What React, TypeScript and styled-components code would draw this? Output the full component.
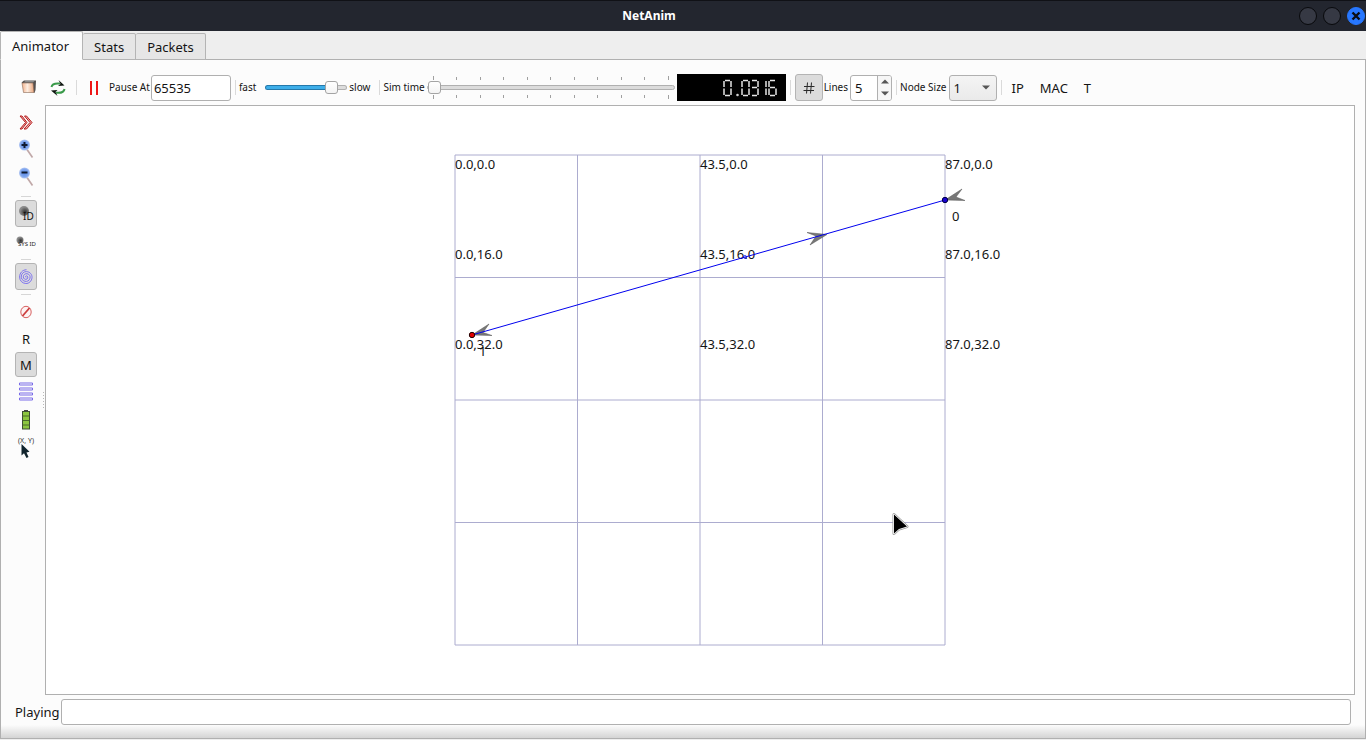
import React, { useState } from "react";
import styled, { createGlobalStyle, css } from "styled-components";

const GlobalStyle = createGlobalStyle`
  *, *::before, *::after { box-sizing: border-box; }
  html, body { margin: 0; padding: 0; }
  body, button, input, select { font-family: "Noto Sans", sans-serif; font-size: 13px; color: #141414; }
`;

const Window = styled.div`
  display: flex;
  flex-direction: column;
  min-height: 100vh;
  background: #eeeeee;
`;

const TitleBar = styled.header`
  display: flex;
  align-items: center;
  height: 31px;
  background: #23262f;
  border-top: 1px solid #101116;
`;

const Title = styled.h1`
  flex: 1;
  margin: 0;
  text-align: center;
  font-size: 12px;
  font-weight: 700;
  line-height: 18px;
  color: #ffffff;
`;

const WindowControls = styled.div`
  display: flex;
  gap: 6px;
  padding: 0 1px;
`;

const WindowButton = styled.button<{ $close?: boolean }>`
  display: flex;
  align-items: center;
  justify-content: center;
  width: 18px;
  height: 18px;
  padding: 0;
  border-radius: 50%;
  border: 1px solid ${(p) => (p.$close ? "#2777ff" : "#08090c")};
  background: ${(p) => (p.$close ? "#2777ff" : "#363944")};
`;

const TabBar = styled.nav`
  display: flex;
  align-items: flex-end;
  height: 29px;
  border-bottom: 1px solid #b0b0b0;
`;

const Tab = styled.button<{ $active?: boolean }>`
  height: 27px;
  margin: 0 0 -1px;
  padding: 0 11px;
  line-height: 18px;
  border: 1px solid #b4b4b4;
  border-left-width: 0;
  border-radius: 2px 2px 0 0;
  background: #e6e6e6;
  ${(p) =>
    p.$active &&
    css`
      height: 29px;
      padding: 0 13px 0 11px;
      border-left-width: 1px;
      border-bottom-color: #fcfcfc;
      background: #fcfcfc;
    `}
`;

const Panel = styled.main`
  flex: 1;
  display: flex;
  flex-direction: column;
  margin-bottom: 1px;
  border: 1px solid #b0b0b0;
  border-top: 0;
  background: linear-gradient(to top, #d4d4d4 0, #fcfcfc 13px);
`;

const Toolbar = styled.div`
  display: flex;
  align-items: center;
  height: 45px;
  padding: 13px 0 3px 19px;
  white-space: nowrap;
`;

const IconButton = styled.button`
  display: flex;
  align-items: center;
  justify-content: center;
  width: 18px;
  height: 27px;
  padding: 0;
  border: 0;
  background: none;
  & + & { margin-left: 11px; }
`;

const Divider = styled.span<{ $before?: number; $after?: number }>`
  flex: none;
  width: 1px;
  height: 15px;
  margin: 0 ${(p) => p.$after ?? 3}px 0 ${(p) => p.$before ?? 4}px;
  background: #dadada;
`;

const SmallLabel = styled.label`
  flex: none;
  font-size: 10px;
  line-height: 15px;
`;

const PauseLabel = styled(SmallLabel)`
  margin-left: 6px;
`;

const TextInput = styled.input`
  height: 26px;
  padding: 0 2px;
  border: 1px solid #b0b0b0;
  border-radius: 3px;
  background: #ffffff;
  outline: none;
`;

const PauseInput = styled(TextInput)`
  width: 80px;
  margin-left: 1px;
`;

const Range = styled.input`
  appearance: none;
  display: block;
  width: 100%;
  height: 13px;
  margin: 0;
  background: none;
  &::-webkit-slider-runnable-track {
    height: 5px;
    border: 1px solid #b0b0b0;
    border-radius: 3px;
    background: #dcdcdc;
  }
  &::-webkit-slider-thumb {
    appearance: none;
    width: 13px;
    height: 13px;
    margin-top: -5px;
    border: 1px solid #a4a4a4;
    border-radius: 3px;
    background: linear-gradient(#ffffff, #f4f4f4);
  }
`;

const SpeedRange = styled(Range)<{ $fill: number }>`
  width: 82px;
  margin: 0 2px 0 9px;
  &::-webkit-slider-runnable-track {
    border-color: transparent;
    background:
      linear-gradient(to right, #3daee9 ${(p) => p.$fill}%, #dcdcdc ${(p) => p.$fill}%) padding-box,
      linear-gradient(to right, #2478aa ${(p) => p.$fill}%, #b0b0b0 ${(p) => p.$fill}%) border-box;
  }
`;

const TimeSlider = styled.div`
  width: 248px;
  margin-left: 2px;
`;

const TickRow = styled.div<{ $below?: boolean }>`
  display: flex;
  justify-content: space-between;
  align-items: ${(p) => (p.$below ? "flex-start" : "flex-end")};
  height: 5px;
  margin: ${(p) => (p.$below ? "1px 6px 0" : "0 6px 1px")};
`;

const Tick = styled.i<{ $end?: boolean }>`
  width: 1px;
  height: ${(p) => (p.$end ? 4 : 3)}px;
  background: #a0a0a0;
`;

const LcdPanel = styled.output`
  display: flex;
  align-items: center;
  justify-content: flex-end;
  width: 109px;
  height: 27px;
  margin-left: 2px;
  padding-right: 9px;
  background: #000000;
`;

const pressed = css`
  border: 1px solid #b4b4b4;
  border-radius: 3px;
  background: #dcdcdc;
`;

const GridButton = styled.button`
  display: flex;
  align-items: center;
  justify-content: center;
  width: 28px;
  height: 27px;
  margin-right: 1px;
  padding: 0;
  ${pressed}
`;

const SpinBox = styled.div`
  display: flex;
  width: 42px;
  height: 26px;
  margin-left: 2px;
  border: 1px solid #b0b0b0;
  border-radius: 3px;
  background: #ffffff;
  overflow: hidden;
`;

const SpinInput = styled.input`
  flex: 1;
  min-width: 0;
  padding: 0 4px;
  border: 0;
  outline: none;
  background: none;
`;

const SpinButtons = styled.div`
  display: flex;
  flex-direction: column;
  width: 14px;
  border-left: 1px solid #b0b0b0;
  background: #f6f6f6;
`;

const SpinButton = styled.button`
  flex: 1;
  display: flex;
  align-items: center;
  justify-content: center;
  padding: 0;
  border: 0;
  background: none;
`;

const SelectWrap = styled.div`
  display: grid;
  align-items: center;
  margin-left: 2px;
  & > * { grid-area: 1 / 1; }
  & > svg { justify-self: end; margin-right: 7px; pointer-events: none; }
`;

const Select = styled.select`
  appearance: none;
  width: 48px;
  height: 26px;
  padding: 0 4px;
  border: 1px solid #b0b0b0;
  border-radius: 3px;
  background: linear-gradient(#f4f4f4, #eaeaea);
`;

const TextButton = styled.button`
  padding: 0;
  margin-left: 10px;
  border: 0;
  background: none;
  line-height: 18px;
  & + & { margin-left: 16px; }
`;

const Workspace = styled.div`
  flex: 1;
  display: flex;
  padding-right: 10px;
`;

const SideBar = styled.div`
  display: flex;
  flex-direction: column;
  align-items: center;
  gap: 1px;
  width: 36px;
  padding: 4px 0 0 14px;
`;

const SideButton = styled.button<{ $pressed?: boolean; $text?: boolean }>`
  display: flex;
  align-items: center;
  justify-content: center;
  width: 22px;
  height: ${(p) => (p.$text ? 25 : 27)}px;
  padding: 0;
  border: 1px solid transparent;
  background: none;
  line-height: 18px;
  ${(p) => p.$pressed && pressed}
`;

const SideDivider = styled.span`
  width: 10px;
  height: 1px;
  margin: 3px 0 2px;
  background: #d6d6d6;
`;

const Splitter = styled.div`
  display: flex;
  align-items: center;
  justify-content: center;
  width: 8px;
  &::before {
    content: "";
    width: 1px;
    height: 17px;
    margin-left: 4px;
    background: repeating-linear-gradient(#b8b8b8 0 1px, transparent 1px 3px);
  }
`;

const Canvas = styled.section`
  flex: 1;
  display: flex;
  align-items: center;
  justify-content: center;
  border: 1px solid #b0b0b0;
  background: #ffffff;
`;

const Scene = styled.svg`
  display: block;
  font-size: 13px;
  fill: #141414;
`;

const StatusBar = styled.footer`
  display: flex;
  align-items: center;
  gap: 1px;
  padding: 4px 14px 13px;
`;

const StatusLabel = styled.label`
  line-height: 18px;
`;

const StatusInput = styled(TextInput)`
  flex: 1;
`;

/* Seven-segment display: a top, b/c right, d bottom, e/f left, g middle. */
const SEGMENTS: Record<string, [number, number, number, number]> = {
  a: [1, 1, 6, 1],
  b: [7, 1.5, 7, 7.5],
  c: [7, 9, 7, 15.5],
  d: [1, 16, 6, 16],
  e: [0, 9, 0, 15.5],
  f: [0, 1.5, 0, 7.5],
  g: [1, 8, 6, 8],
};

const DIGITS: Record<string, string> = {
  "0": "abcdef", "1": "bc", "2": "abdeg", "3": "abcdg", "4": "bcfg",
  "5": "acdfg", "6": "acdefg", "7": "abc", "8": "abcdefg", "9": "abcdfg", ".": "",
};

function Lcd({ value }: { value: string }) {
  const pitch = 9;
  return (
    <LcdPanel aria-label={value}>
      <svg width={value.length * pitch} height="18" viewBox={`-1 -0.5 ${value.length * pitch} 18`} role="img" aria-label={value}>
        <g stroke="#e4e4e4" strokeWidth="1.5">
          {value.split("").map((ch, i) => (
            <g key={i} transform={`translate(${i * pitch} 0)`}>
              {ch === "." && <circle cx="4.5" cy="15.5" r="0.5" />}
              {DIGITS[ch].split("").map((s) => {
                const [x1, y1, x2, y2] = SEGMENTS[s];
                const dx = ch === "1" ? -1 : 0;
                return <line key={s} x1={x1 + dx} y1={y1} x2={x2 + dx} y2={y2} />;
              })}
            </g>
          ))}
        </g>
      </svg>
    </LcdPanel>
  );
}

const Arrow = ({ up }: { up?: boolean }) => (
  <svg width="8" height="5" viewBox="0 0 8 5">
    <path d={up ? "M0 4.5 4 0.5 8 4.5z" : "M0 0.5 4 4.5 8 0.5z"} fill="#555" />
  </svg>
);

const OpenIcon = () => (
  <svg width="16" height="16" viewBox="0 -0.5 16 16">
    <defs>
      <linearGradient id="openFace" x1="0" x2="1">
        <stop offset="0" stopColor="#f2b08a" />
        <stop offset="0.45" stopColor="#fdeee2" />
        <stop offset="1" stopColor="#e9a57c" />
      </linearGradient>
    </defs>
    <path d="M0.500 2 3 0h12l-0.500 9.500L13.500 12.500z" fill="#54504e" />
    <path d="M2.500 2 4.500 0.500h9L12 2z" fill="#8c8c8c" />
    <path d="M1 2.500h11l1 9.500H2.500z" fill="url(#openFace)" stroke="#8a6a58" strokeWidth="0.6" />
  </svg>
);

const ReloadIcon = () => (
  <svg width="16" height="16" viewBox="0 0 16 16">
    <g fill="none" stroke="#3a9a4a" strokeWidth="2">
      <path d="M1.500 7C2 4 5 3 10 3.500" />
      <path d="M14.500 9C14 12.500 11 13.200 6 12.700" />
    </g>
    <path d="M8.500 0 14.500 5.500 8 6 10.500 4z" fill="#0c140e" />
    <path d="M7.500 16 1 10.500 7.500 10 5.500 12z" fill="#0c140e" />
  </svg>
);

const PauseIcon = () => (
  <svg width="10" height="16" viewBox="0 0 10 16">
    <path d="M2 1v14M8 1v14" stroke="#ee0c0c" strokeWidth="1.900" />
  </svg>
);

const GridIcon = () => (
  <svg width="12" height="12" viewBox="0 0 12 12">
    <path d="M4.500 0.500 3.500 11.500M8.500 0.500 7.500 11.500M1 4.500h10.500M0.500 8.500H11" fill="none" stroke="#2a2a2a" />
  </svg>
);

const ForwardIcon = () => (
  <svg width="14" height="14" viewBox="0 0.5 14 14" overflow="visible">
    <g fill="#f0b4b4" stroke="#b51a1a" strokeWidth="1">
      <path d="M1 0.500 6.500 7 1 13.500 3 13.500 8 7 3 0.500z" />
      <path d="M5.500 0.500 11 7 5 13.500 7.500 13.500 13 7 7.500 0.500z" />
    </g>
  </svg>
);

const ZoomIcon = ({ plus }: { plus?: boolean }) => (
  <svg width="16" height="20" viewBox="0 2.5 16 20" overflow="visible">
    <defs>
      <radialGradient id="lens">
        <stop offset="0" stopColor="#5a8bea" />
        <stop offset="0.7" stopColor="#7fa5ee" />
        <stop offset="1" stopColor="#b4c8f2" />
      </radialGradient>
    </defs>
    <path d="M9 11 14.500 19" stroke="#c0a8a8" strokeWidth="1.600" />
    <circle cx="6.500" cy="6.500" r="5.500" fill="url(#lens)" />
    <path d={plus ? "M3.500 6.500h6M6.500 3.500v6" : "M3.500 6h6"} stroke="#101a30" strokeWidth="2" />
  </svg>
);

const IdIcon = () => (
  <svg width="16" height="18" viewBox="0 0 16 18">
    <defs>
      <radialGradient id="ball" cx="0.6" cy="0.6">
        <stop offset="0" stopColor="#2e2e2e" />
        <stop offset="1" stopColor="#8c8c8c" />
      </radialGradient>
    </defs>
    <circle cx="6" cy="6" r="5" fill="url(#ball)" />
    <text x="5" y="15" fontSize="10" fontFamily="Noto Sans, sans-serif" fill="#111">ID</text>
  </svg>
);

const SysIdIcon = () => (
  <svg width="20" height="14" viewBox="0 -1 20 14">
    <circle cx="4" cy="4" r="3.500" fill="url(#ball)" />
    <text x="2" y="10" fontSize="6" fontFamily="Noto Sans, sans-serif" fill="#222">SYS ID</text>
  </svg>
);

const SpiralIcon = () => (
  <svg width="14" height="16" viewBox="0 0 14 16">
    <path
      d="M7 8.500C6.200 8 6.500 6.800 7.500 6.800 9 6.900 9.300 9 8 10 6.300 11 4.300 9.800 4.300 7.800 4.400 5.500 6.300 4.500 8 4.700 10.500 5 11.500 7.200 11 9.200 10.300 11.800 8 12.800 6 12.300 3.300 11.600 2 9.500 2.300 7 2.700 4.200 5 2.500 7.500 2.600 11 2.800 13.200 5.500 13 8.500 12.800 12 10 14.700 6.800 14.500 3 14.300 0.700 11.500 0.600 8 0.600 4 3.500 0.800 7.500 0.700"
      fill="none" stroke="#7468f0" strokeWidth="0.900"
    />
  </svg>
);

const ForbidIcon = () => (
  <svg width="12" height="14" viewBox="0 0 12 14">
    <ellipse cx="6" cy="7" rx="5.200" ry="5.700" fill="#fdf3f3" stroke="#d25050" strokeWidth="0.900" />
    <path d="M2.500 11 9.500 3" stroke="#cc3c3c" strokeWidth="1.800" />
  </svg>
);

const LinesIcon = () => (
  <svg width="14" height="20" viewBox="0 0.5 14 20">
    <g fill="none" stroke="#7a6ce8" strokeWidth="1">
      {[1.5, 6.5, 11.5, 16.5].map((y) => (
        <path key={y} d={`M0.500 ${y}h13M0.500 ${y + 2}h13M0.500 ${y}v2M13.500 ${y}v2`} />
      ))}
    </g>
  </svg>
);

const BatteryIcon = () => (
  <svg width="10" height="20" viewBox="0 0.5 10 20">
    <path d="M3 0.500h4V2H3z" fill="#444" />
    <rect x="1.500" y="2" width="7" height="17.500" fill="#8cc63f" stroke="#3f4f35" />
    <path d="M1.500 6.500h7M1.500 11h7M1.500 15.500h7" stroke="#4b6b2c" />
  </svg>
);

const PositionIcon = () => (
  <svg width="18" height="24" viewBox="0 0 18 24">
    <text x="9" y="7" textAnchor="middle" fontSize="7" fontFamily="Noto Sans, sans-serif" fill="#333">(X, Y)</text>
    <path d="M4.500 8 4.500 19.500 7 17.200 9.500 22 11.500 21 9.500 16.500 12.500 15.800z" fill="#10242c" />
  </svg>
);

const GRID = [0, 122.5, 245, 367.5, 490];
const COLUMNS: [number, string][] = [[0, "0.0"], [245, "43.5"], [490, "87.0"]];
const ROWS: [number, string][] = [[14, "0.0"], [104, "16.0"], [194, "32.0"]];

function AnimationScene() {
  return (
    <Scene width="620" height="500" viewBox="-65 -5 620 500">
      <g stroke="#acaccf" strokeWidth="1">
        {GRID.map((v) => (
          <React.Fragment key={v}>
            <line x1={v} y1="0" x2={v} y2="490" />
            <line x1="0" y1={v} x2="490" y2={v} />
          </React.Fragment>
        ))}
      </g>
      {ROWS.map(([y, row]) =>
        COLUMNS.map(([x, col]) => (
          <text key={col + row} x={x} y={y}>{`${col},${row}`}</text>
        ))
      )}
      <text x="497" y="66">0</text>
      <text x="24" y="201">1</text>
      <g fill="#777777" stroke="#555555" strokeWidth="0.500">
        <path d="M17 180 34 169 28 177.500 37 180.500z" />
        <path d="M490 45 507 34 501 42 510 45.500z" />
        <path d="M372 79.500 352 77.500 361 81 355 90z" />
      </g>
      <g stroke="#0000ee" fill="none">
        <line x1="17" y1="180" x2="490" y2="45" />
        <circle cx="290" cy="102" r="1.500" strokeWidth="0.700" />
      </g>
      <circle cx="17" cy="180" r="2.700" fill="#e00000" stroke="#220000" />
      <circle cx="490" cy="45" r="2.700" fill="#1800d0" stroke="#000044" />
      <g transform="translate(0 1)" strokeLinejoin="round">
        <path d="M439 358.500v19l5-4.500 8-2.500z" stroke="#999" strokeWidth="3" />
        <path d="M439 358.500v19l5-4.500 8-2.500z" stroke="#fff" strokeWidth="1.500" />
        <path d="M439 358.500v19l5-4.500 8-2.500z" fill="#000" />
      </g>
    </Scene>
  );
}

export default function App() {
  const [speed, setSpeed] = useState(88);
  const [time, setTime] = useState(0);
  return (
    <>
      <GlobalStyle />
      <Window>
        <TitleBar>
          <Title>NetAnim</Title>
          <WindowControls>
            <WindowButton aria-label="Minimize" />
            <WindowButton aria-label="Maximize" />
            <WindowButton $close aria-label="Close">
              <svg width="10" height="10" viewBox="0 0 10 10">
                <path d="M1.500 1.500 8.500 8.500M8.500 1.500 1.500 8.500" stroke="#0b0d14" strokeWidth="2.400" />
              </svg>
            </WindowButton>
          </WindowControls>
        </TitleBar>
        <TabBar>
          <Tab $active>Animator</Tab>
          <Tab>Stats</Tab>
          <Tab>Packets</Tab>
        </TabBar>
        <Panel>
          <Toolbar>
            <IconButton aria-label="Open trace file"><OpenIcon /></IconButton>
            <IconButton aria-label="Reload"><ReloadIcon /></IconButton>
            <Divider $before={9} $after={8} />
            <IconButton aria-label="Pause"><PauseIcon /></IconButton>
            <PauseLabel htmlFor="pauseAt">Pause At</PauseLabel>
            <PauseInput id="pauseAt" defaultValue="65535" />
            <Divider />
            <SmallLabel htmlFor="speed">fast</SmallLabel>
            <SpeedRange id="speed" type="range" min="0" max="100" value={speed} $fill={speed}
              onChange={(e) => setSpeed(Number(e.target.value))} />
            <SmallLabel htmlFor="speed">slow</SmallLabel>
            <Divider $before={9} />
            <SmallLabel htmlFor="simTime">Sim time</SmallLabel>
            <TimeSlider>
              <TickRow>
                {Array.from({ length: 11 }, (_, i) => <Tick key={i} $end={i % 10 === 0} />)}
              </TickRow>
              <Range id="simTime" type="range" min="0" max="100" value={time}
                onChange={(e) => setTime(Number(e.target.value))} />
              <TickRow $below>
                {Array.from({ length: 11 }, (_, i) => <Tick key={i} $end={i % 10 === 0} />)}
              </TickRow>
            </TimeSlider>
            <Lcd value="0.0316" />
            <Divider $after={4} />
            <GridButton aria-label="Show grid" aria-pressed="true"><GridIcon /></GridButton>
            <SmallLabel htmlFor="lines">Lines</SmallLabel>
            <SpinBox>
              <SpinInput id="lines" defaultValue="5" />
              <SpinButtons>
                <SpinButton aria-label="More lines"><Arrow up /></SpinButton>
                <SpinButton aria-label="Fewer lines"><Arrow /></SpinButton>
              </SpinButtons>
            </SpinBox>
            <Divider />
            <SmallLabel htmlFor="nodeSize">Node Size</SmallLabel>
            <SelectWrap>
              <Select id="nodeSize" defaultValue="1">
                <option>1</option>
                <option>2</option>
                <option>5</option>
              </Select>
              <Arrow />
            </SelectWrap>
            <Divider $after={0} />
            <TextButton>IP</TextButton>
            <TextButton>MAC</TextButton>
            <TextButton>T</TextButton>
          </Toolbar>
          <Workspace>
            <SideBar>
              <SideButton aria-label="Fast forward"><ForwardIcon /></SideButton>
              <SideButton aria-label="Zoom in"><ZoomIcon plus /></SideButton>
              <SideButton aria-label="Zoom out"><ZoomIcon /></SideButton>
              <SideDivider />
              <SideButton $pressed aria-label="Show node id"><IdIcon /></SideButton>
              <SideButton aria-label="Show system id"><SysIdIcon /></SideButton>
              <SideDivider />
              <SideButton $pressed aria-label="Show wireless circles"><SpiralIcon /></SideButton>
              <SideDivider />
              <SideButton aria-label="Block packets"><ForbidIcon /></SideButton>
              <SideButton $text>R</SideButton>
              <SideButton $text $pressed>M</SideButton>
              <SideButton aria-label="Packet metadata"><LinesIcon /></SideButton>
              <SideButton aria-label="Battery capacity"><BatteryIcon /></SideButton>
              <SideButton aria-label="Mouse position"><PositionIcon /></SideButton>
            </SideBar>
            <Splitter />
            <Canvas>
              <AnimationScene />
            </Canvas>
          </Workspace>
          <StatusBar>
            <StatusLabel htmlFor="status">Playing</StatusLabel>
            <StatusInput id="status" readOnly />
          </StatusBar>
        </Panel>
      </Window>
    </>
  );
}
